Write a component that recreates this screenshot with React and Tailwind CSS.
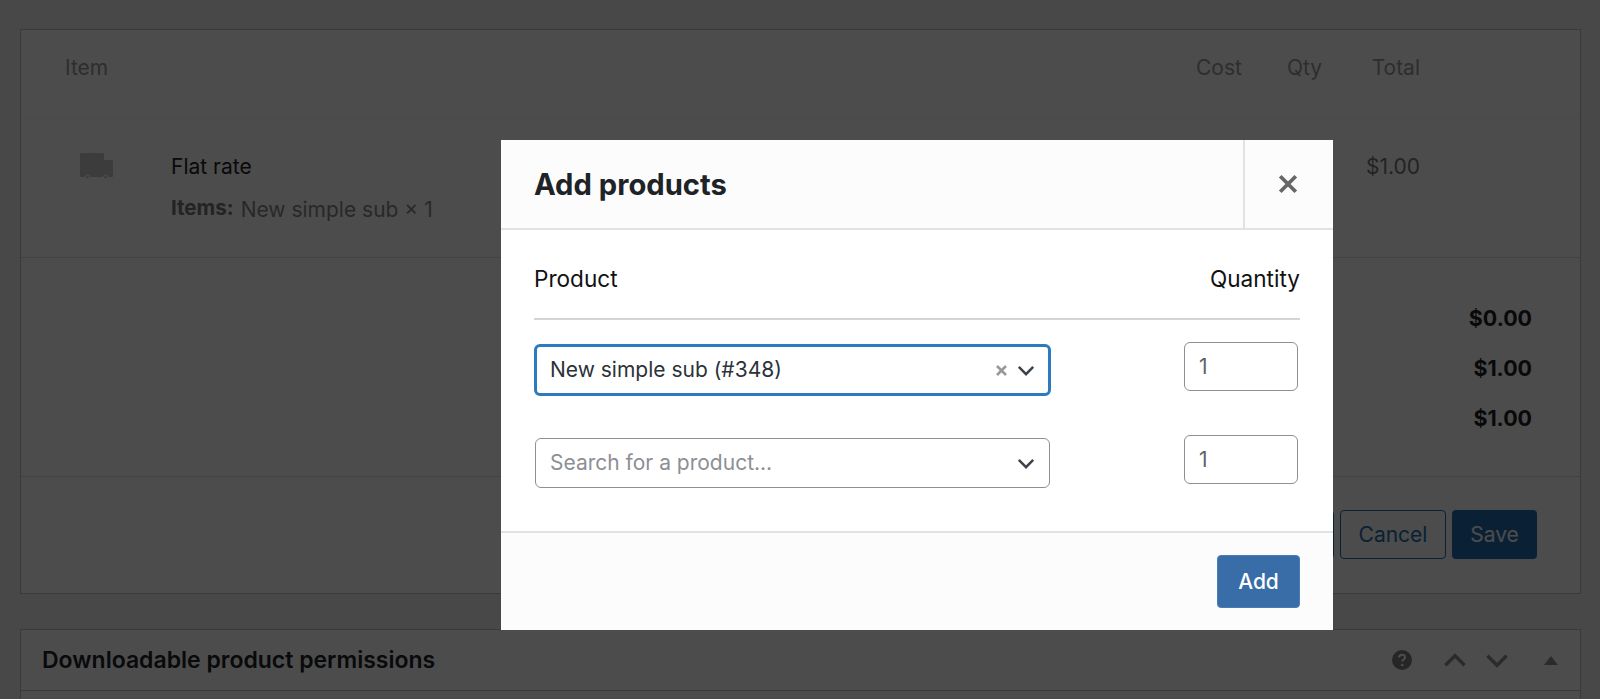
import React from 'react';

const font = { fontFamily: 'Inter, "Liberation Sans", sans-serif' };

function Chevron({ className }) {
  return (
    <svg className={className} viewBox="0 0 20 12" fill="none" stroke="currentColor" strokeWidth="2.8">
      <path d="M2 2l8 8 8-8" />
    </svg>
  );
}

function TotalRow({ value }) {
  return <div className="h-[50px] flex items-center justify-end font-bold text-[21.4px] text-[#1f1f1f]">{value}</div>;
}

function ProductSelect({ focused, children }) {
  return (
    <div
      className={
        focused
          ? 'w-[517px] h-[52px] mt-[2px] pl-[13px] pr-[13px] flex items-center justify-between bg-white rounded-[6px] border-[3px] border-[#2b7bbd]'
          : 'w-[515px] h-[50px] mt-[3px] ml-[1px] pl-[14px] pr-[14px] flex items-center justify-between bg-white rounded-[6px] border border-[#8c8f94]'
      }
    >
      {children}
    </div>
  );
}

function QtyInput() {
  return (
    <div className="w-[114px] h-[49px] pl-[14px] flex items-center bg-white rounded-[6px] border border-[#8c8f94] text-[21px] text-[#5f6368]">
      1
    </div>
  );
}

export default function App() {
  return (
    <div className="relative h-[699px] overflow-hidden bg-[#f0f0f1] pt-[29px] px-[20px] text-[21px] text-[#3c434a]" style={font}>

      {/* order items panel */}
      <div className="w-[1561px] h-[565px] flex flex-col bg-white border border-[#c3c4c7]">
        <div className="h-[88px] pl-[44px] pb-[12px] flex items-center text-[#999]">
          <span className="flex-1">Item</span>
          <span className="w-[48px]">Cost</span>
          <span className="w-[35px] ml-[43px]">Qty</span>
          <span className="w-[50px] ml-[48px] text-right">Total</span>
          <span className="w-[160px]" />
        </div>

        <div className="h-[140px] flex border-b border-[#dcdcde] border-t border-t-[#f6f6f6]">
          <div className="w-[150px] pt-[34px] pl-[59px]">
            <svg width="33" height="26" viewBox="0 0 33 26" fill="#c8c8c8">
              <path d="M1 0h22a1 1 0 0 1 1 1v6h8a1 1 0 0 1 1 1v15a1 1 0 0 1-1 1H1a1 1 0 0 1-1-1V1a1 1 0 0 1 1-1z" />
              <circle cx="7.5" cy="24" r="2" stroke="#fff" strokeWidth="1.2" />
              <circle cx="25.5" cy="24" r="2" stroke="#fff" strokeWidth="1.2" />
            </svg>
          </div>
          <div className="flex-1 pt-[33px]">
            <div className="text-[#222] leading-[30px]">Flat rate</div>
            <div className="mt-[13px] flex items-baseline leading-[30px]">
              <span className="font-bold text-[20.5px] text-[#777] mr-[7px] -translate-y-[2px]">Items:</span>
              <span className="text-[#888]">New simple sub × 1</span>
            </div>
          </div>
          <div className="w-[260px] pt-[33px] pr-[160px] text-right leading-[30px] text-[#777]">$1.00</div>
        </div>

        <div className="h-[219px] pt-[35px] pr-[48px] border-b border-[#dcdcde]">
          <TotalRow value="$0.00" />
          <TotalRow value="$1.00" />
          <TotalRow value="$1.00" />
        </div>

        <div className="flex-1 pt-[33px] pr-[43px] flex justify-end items-start gap-[6px]">
          <button className="h-[49px] w-[100px] rounded-[4px] border border-[#2271b1] text-[#2271b1]">Recalc</button>
          <button className="h-[49px] w-[106px] rounded-[4px] border border-[#2271b1] text-[#2271b1]">Cancel</button>
          <button className="h-[49px] w-[85px] rounded-[4px] bg-[#2271b1] text-white">Save</button>
        </div>
      </div>

      {/* downloads panel */}
      <div className="w-[1561px] h-[120px] mt-[35px] bg-white border border-[#c3c4c7]">
        <div className="h-[61px] pl-[21px] flex items-center border-b border-[#c3c4c7]">
          <span className="flex-1 font-semibold text-[23px] text-[#1d2327]">Downloadable product permissions</span>
          <svg className="w-[20px] h-[20px] mr-[31px] text-[#808080]" viewBox="0 0 20 20">
            <circle cx="10" cy="10" r="10" fill="currentColor" />
            <path d="M7 7.6c0-1.8 1.3-2.8 3.1-2.8s3 1 3 2.5c0 2.4-2.9 2.3-2.9 4.3" fill="none" stroke="#fff" strokeWidth="2" />
            <circle cx="10.2" cy="15" r="1.3" fill="#fff" />
          </svg>
          <Chevron className="w-[24px] h-[15px] rotate-180 text-[#8f8f8f]" />
          <Chevron className="w-[24px] h-[15px] ml-[18px] text-[#8f8f8f]" />
          <svg className="w-[14px] h-[9px] ml-[35px] mr-[22px] text-[#8f8f8f]" viewBox="0 0 14 9" fill="currentColor">
            <path d="M7 0l7 9H0z" />
          </svg>
        </div>
      </div>

      {/* dim backdrop + dialog */}
      <div className="absolute inset-0 bg-black/70 pl-[501px] pt-[140px]">
        <div className="w-[832px] h-[490px] flex flex-col bg-white">
          <div className="h-[90px] flex shrink-0 bg-[#fcfcfc] border-b-2 border-[#e2e2e2]">
            <div className="flex-1 pl-[33px] pt-[2px] flex items-center font-bold text-[29.2px] text-[#1d2327]">Add products</div>
            <div className="w-[90px] pr-[3px] flex items-center justify-center border-l-2 border-[#e2e2e2]">
              <svg className="w-[20px] h-[20px] text-[#666]" viewBox="0 0 18 18" fill="none" stroke="currentColor" strokeWidth="3.4">
                <path d="M2 2l14 14M16 2L2 16" />
              </svg>
            </div>
          </div>

          <div className="h-[301px] shrink-0 pl-[33px] pr-[33px]">
            <div className="h-[90px] pt-[10px] flex items-center justify-between border-b-2 border-[#d3d5d8] text-[22.6px] text-[#111]">
              <span>Product</span>
              <span>Quantity</span>
            </div>
            <div className="mt-[22px] flex items-start justify-between">
              <ProductSelect focused>
                <span className="text-[#2c3338]">New simple sub (#348)</span>
                <span className="flex items-center">
                  <svg className="w-[11px] h-[11px] mr-[10px] text-[#999]" viewBox="0 0 11 11" fill="none" stroke="currentColor" strokeWidth="2.6">
                    <path d="M1 1l9 9M10 1l-9 9" />
                  </svg>
                  <Chevron className="w-[18px] h-[11px] text-[#3c434a]" />
                </span>
              </ProductSelect>
              <div className="mr-[2px]"><QtyInput /></div>
            </div>
            <div className="mt-[39px] flex items-start justify-between">
              <ProductSelect>
                <span className="text-[#8c8f94]">Search for a product...</span>
                <Chevron className="w-[18px] h-[11px] text-[#3c434a]" />
              </ProductSelect>
              <div className="mr-[2px]"><QtyInput /></div>
            </div>
          </div>

          <div className="flex-1 pt-[22px] pr-[33px] flex justify-end items-start bg-[#fcfcfc] border-t-2 border-[#e2e2e2]">
            <button className="w-[83px] h-[53px] rounded-[4px] bg-[#396da8] border border-[#4a7db5] text-white font-medium">Add</button>
          </div>
        </div>
      </div>
    </div>
  );
}
